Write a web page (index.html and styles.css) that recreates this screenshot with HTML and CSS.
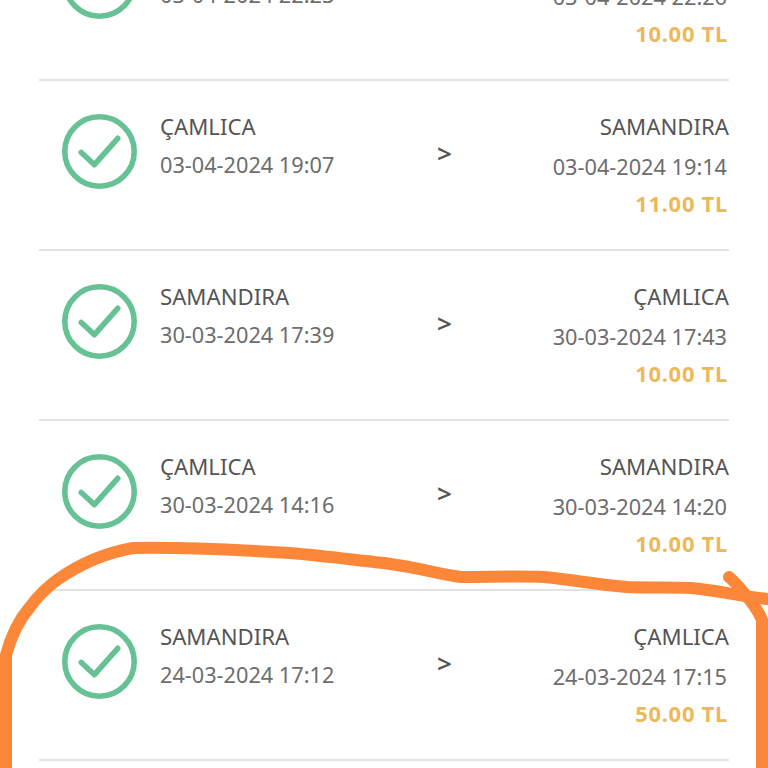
FILE: index.html
```html
<!DOCTYPE html>
<html>
  <head>
    <meta charset="utf-8">
    <title>Yolculuklar</title>
    <link rel="stylesheet" href="styles.css">
  </head>
  <body>
    <svg class="defs" width="0" height="0">
      <symbol id="ok" viewBox="0 0 74 74">
        <circle cx="37" cy="37" r="34.25" fill="none" stroke="#66c294" stroke-width="5.5"/>
        <path d="M19 38 L32 50 L55 24" fill="none" stroke="#66c294" stroke-width="5.5" stroke-linecap="round" stroke-linejoin="round"/>
      </symbol>
    </svg>

    <div id="list">
      <div class="trip">
        <svg class="icon"><use href="#ok"/></svg>
        <div class="from">
          <div class="station">SAMANDIRA</div>
          <div class="date">03-04-2024 22:23</div>
        </div>
        <div class="arrow">&gt;</div>
        <div class="to">
          <div class="station">ÇAMLICA</div>
          <div class="date">03-04-2024 22:26</div>
          <div class="price">10.00 TL</div>
        </div>
      </div>
      <div class="trip">
        <svg class="icon"><use href="#ok"/></svg>
        <div class="from">
          <div class="station">ÇAMLICA</div>
          <div class="date">03-04-2024 19:07</div>
        </div>
        <div class="arrow">&gt;</div>
        <div class="to">
          <div class="station">SAMANDIRA</div>
          <div class="date">03-04-2024 19:14</div>
          <div class="price">11.00 TL</div>
        </div>
      </div>
      <div class="trip">
        <svg class="icon"><use href="#ok"/></svg>
        <div class="from">
          <div class="station">SAMANDIRA</div>
          <div class="date">30-03-2024 17:39</div>
        </div>
        <div class="arrow">&gt;</div>
        <div class="to">
          <div class="station">ÇAMLICA</div>
          <div class="date">30-03-2024 17:43</div>
          <div class="price">10.00 TL</div>
        </div>
      </div>
      <div class="trip">
        <svg class="icon"><use href="#ok"/></svg>
        <div class="from">
          <div class="station">ÇAMLICA</div>
          <div class="date">30-03-2024 14:16</div>
        </div>
        <div class="arrow">&gt;</div>
        <div class="to">
          <div class="station">SAMANDIRA</div>
          <div class="date">30-03-2024 14:20</div>
          <div class="price">10.00 TL</div>
        </div>
      </div>
      <div class="trip">
        <svg class="icon"><use href="#ok"/></svg>
        <div class="from">
          <div class="station">SAMANDIRA</div>
          <div class="date">24-03-2024 17:12</div>
        </div>
        <div class="arrow">&gt;</div>
        <div class="to">
          <div class="station">ÇAMLICA</div>
          <div class="date">24-03-2024 17:15</div>
          <div class="price">50.00 TL</div>
        </div>
      </div>
    </div>

    <!-- hand drawn marker on top of the screenshot -->
    <svg id="marker" width="768" height="768" viewBox="0 0 768 768">
      <path d="M6 768 L6 655 C10 640 17 622 30 607 C38 596 46 588 57 580 C78 565 105 553 133 548 C180 547 240 550 290 553 C325 556 355 560 384 563 C415 567 440 574 461 577 C490 577 520 576 544 577 C575 580 600 585 627 587 C650 588 670 587 691 588 C715 590 740 596 767 599"/>
      <path d="M729 577 C735 582 740 588 744 593 C752 602 758 610 762 620 L762 768"/>
    </svg>
  </body>
</html>
```

FILE: styles.css
```css
html,body{
  margin: 0;
  height: 768px;
  overflow: hidden;
  background: #fff;
}
body{
  font-family: "Noto Sans", "Open Sans", sans-serif;
  position: relative;
}
.defs{
  display: block;
  height: 0;
}
#list{
  margin: -89px 39px 0;
}
.trip{
  height: 168px;
  border-bottom: 2px solid #e3e3e3;
  display: flex;
  align-items: flex-start;
}
.icon{
  width: 75px;
  height: 75px;
  margin: 33px 0 0 23px;
  flex: none;
}
.from{
  margin: 30px 0 0 23px;
  width: 277px;
  flex: none;
}
.arrow{
  margin-top: 54px;
  font-size: 26px;
  font-weight: 600;
  line-height: 36px;
  width: 16px;
  color: #555;
  flex: none;
}
.to{
  margin-top: 30px;
  flex: 1;
  text-align: right;
}
.station{
  font-size: 22.2px;
  line-height: 32px;
  color: #555;
}
.date{
  font-size: 21.7px;
  line-height: 32px;
  margin-top: 6px;
  color: #6d6d6d;
}
.to .date{
  margin-top: 8px;
  padding-right: 2px;
}
.price{
  font-size: 22px;
  line-height: 32px;
  margin-top: 4px;
  padding-right: 1px;
  font-weight: 700;
  letter-spacing: 0.7px;
  color: #ebb95a;
}
#marker{
  position: absolute;
  left: 0;
  top: 0;
}
#marker path{
  fill: none;
  stroke: #fc8738;
  stroke-width: 12;
  stroke-linecap: round;
  stroke-linejoin: round;
}
```
